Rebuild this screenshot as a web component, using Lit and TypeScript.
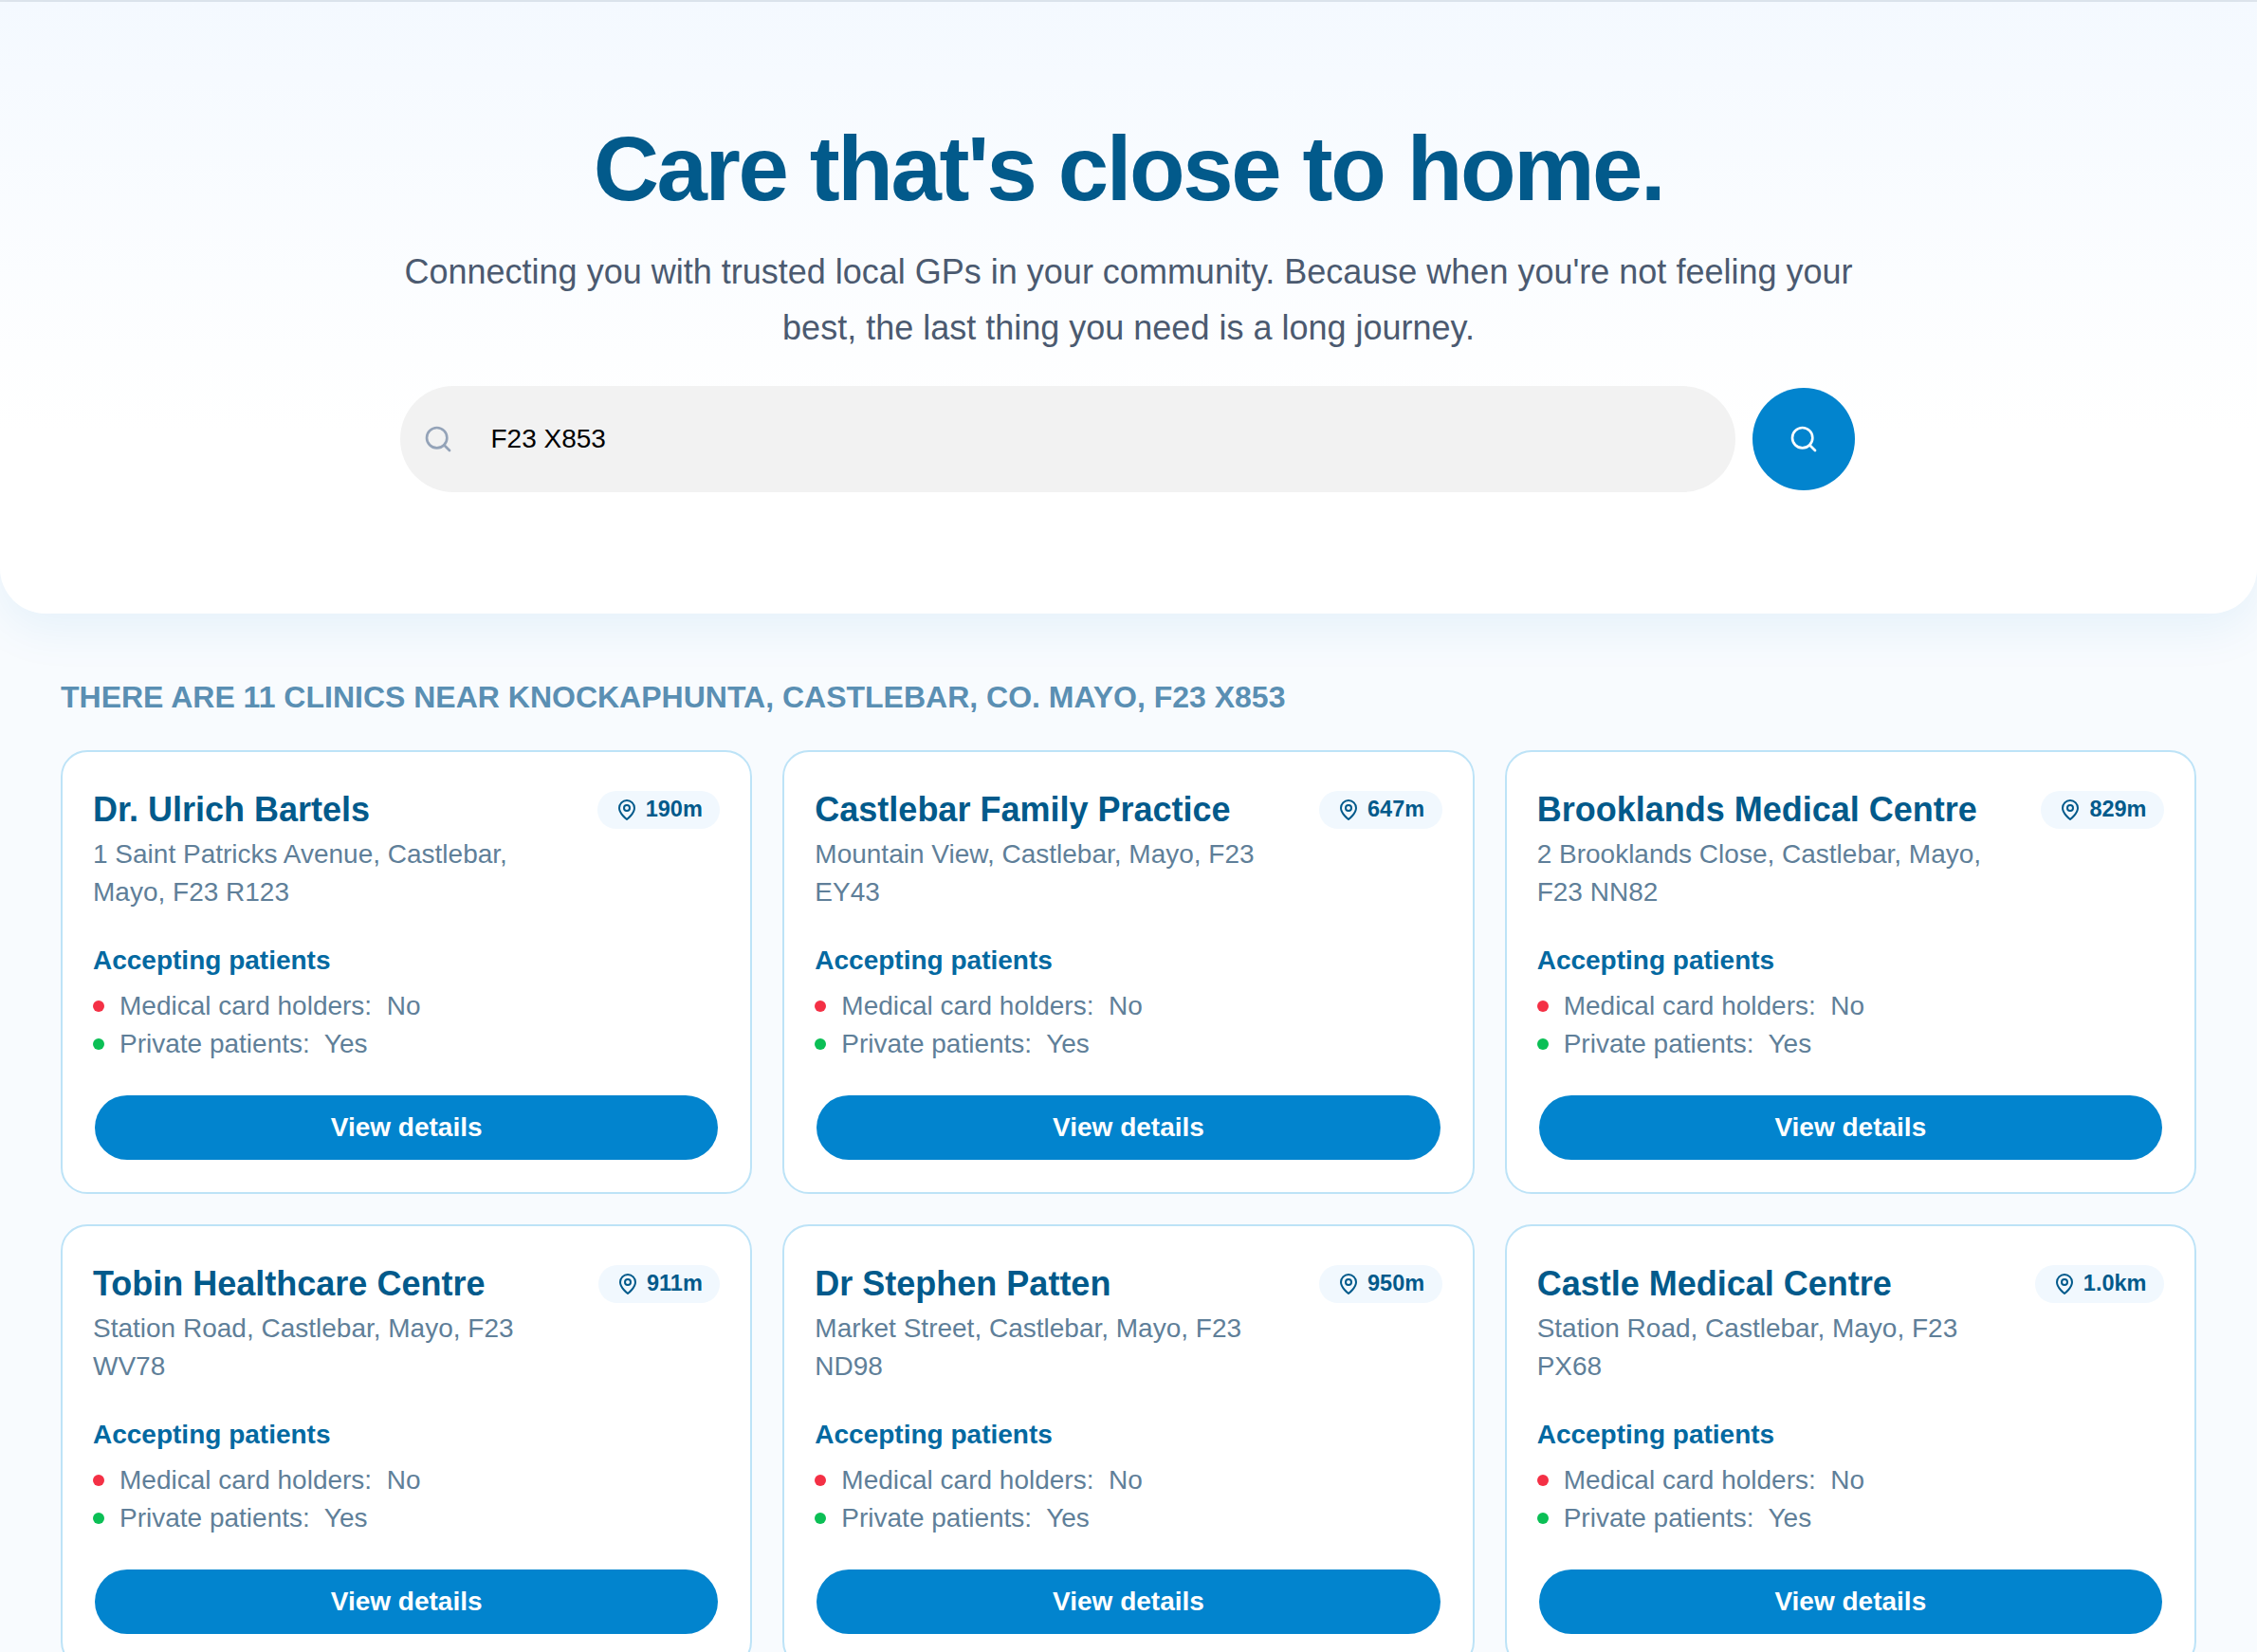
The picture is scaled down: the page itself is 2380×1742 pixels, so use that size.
import { LitElement, html, css, svg } from "lit";
import { customElement } from "lit/decorators.js";

const clinics = [
  { name: "Dr. Ulrich Bartels", dist: "190m", addr: "1 Saint Patricks Avenue, Castlebar, Mayo, F23 R123" },
  { name: "Castlebar Family Practice", dist: "647m", addr: "Mountain View, Castlebar, Mayo, F23 EY43" },
  { name: "Brooklands Medical Centre", dist: "829m", addr: "2 Brooklands Close, Castlebar, Mayo, F23 NN82" },
  { name: "Tobin Healthcare Centre", dist: "911m", addr: "Station Road, Castlebar, Mayo, F23 WV78" },
  { name: "Dr Stephen Patten", dist: "950m", addr: "Market Street, Castlebar, Mayo, F23 ND98" },
  { name: "Castle Medical Centre", dist: "1.0km", addr: "Station Road, Castlebar, Mayo, F23 PX68" },
];

const searchIcon = svg`<circle cx="11" cy="11" r="8"></circle><path d="m21 21-4.3-4.3"></path>`;
const pinIcon = svg`<path d="M20 10c0 6-8 12-8 12s-8-6-8-12a8 8 0 0 1 16 0Z"></path><circle cx="12" cy="10" r="3"></circle>`;

@customElement("app-root")
export class AppRoot extends LitElement {
  static styles = css`
    :host {
      display: block;
      height: 1742px;
      overflow: hidden;
      background: #f8fbfe;
      font-family: "Liberation Sans", Arial, sans-serif;
    }
    .topline { height: 2px; background: #dfe5ec; }
    .hero {
      position: relative;
      padding: 116px 0 128px;
      background: linear-gradient(180deg, #f4f9ff 0%, #ffffff 70%);
      border-radius: 0 0 48px 48px;
      box-shadow: 0 16px 50px rgba(2, 132, 206, 0.08);
      text-align: center;
    }
    h1 {
      margin: 0;
      font-size: 96px;
      line-height: 120px;
      font-weight: 700;
      letter-spacing: -2.4px;
      color: #025a8b;
    }
    .sub {
      margin: 19px auto 32px;
      width: 1600px;
      font-size: 36px;
      line-height: 59px;
      color: #4b5a70;
    }
    .search {
      display: flex;
      align-items: center;
      gap: 18px;
      width: 1537px;
      padding-right: 3px;
      box-sizing: border-box;
      margin: 0 auto;
    }
    .bar {
      flex: 1;
      height: 112px;
      display: flex;
      align-items: center;
      gap: 40px;
      padding-left: 24px;
      box-sizing: border-box;
      border-radius: 56px;
      background: #f2f2f2;
      font-size: 28px;
      color: #000;
    }
    .bar svg { color: #94a3b8; }
    .go {
      width: 108px;
      height: 108px;
      flex: none;
      border-radius: 50%;
      background: #0284ce;
      color: #fff;
      display: flex;
      align-items: center;
      justify-content: center;
    }
    svg.icon {
      fill: none;
      stroke: currentColor;
      stroke-width: 2;
      stroke-linecap: round;
      stroke-linejoin: round;
      flex: none;
    }
    main { padding: 0 64px; }
    h2 {
      margin: 67.5px 0 36.5px;
      font-size: 32px;
      line-height: 40px;
      font-weight: 700;
      color: #5a8fb3;
    }
    .grid {
      display: grid;
      grid-template-columns: repeat(3, 1fr);
      column-gap: 32px;
      row-gap: 32px;
    }
    .card {
      box-sizing: border-box;
      height: 468px;
      padding: 40.5px 32px 34px;
      border: 2.5px solid #bde3f7;
      border-radius: 28px;
      background: #fff;
      display: flex;
      flex-direction: column;
    }
    .head {
      display: flex;
      justify-content: space-between;
      align-items: center;
      height: 40px;
    }
    .name {
      font-size: 36px;
      line-height: 40px;
      font-weight: 700;
      color: #025a8b;
    }
    .badge {
      display: flex;
      align-items: center;
      gap: 8px;
      height: 40px;
      padding: 0 18.5px 0 19px;
      border-radius: 20px;
      background: #f1f8fe;
      font-size: 23.5px;
      font-weight: 700;
      color: #025a8b;
    }
    .addr {
      margin: 7px 0 0;
      max-width: 490px;
      font-size: 28px;
      line-height: 40px;
      color: #5f7f99;
    }
    .acc {
      margin-top: 32.5px;
      font-size: 28px;
      line-height: 40px;
      font-weight: 700;
      color: #0369a1;
    }
    .row {
      display: flex;
      align-items: center;
      gap: 16px;
      font-size: 28px;
      line-height: 40px;
      color: #5f7f99;
      white-space: pre;
    }
    .acc + .row { margin-top: 8px; }
    .dot { width: 12px; height: 12px; border-radius: 50%; }
    .no { background: #f43045; }
    .yes { background: #0bbf55; }
    .btn {
      margin: auto 2px 0;
      height: 68px;
      border-radius: 34px;
      background: #0284ce;
      color: #fff;
      font-size: 28px;
      font-weight: 700;
      display: flex;
      align-items: center;
      justify-content: center;
    }
  `;

  render() {
    return html`
      <div class="topline"></div>
      <section class="hero">
        <h1>Care that's close to home.</h1>
        <p class="sub">Connecting you with trusted local GPs in your community. Because when you're not feeling your best, the last thing you need is a long journey.</p>
        <div class="search">
          <div class="bar">
            <svg class="icon" width="32" height="32" viewBox="0 0 24 24">${searchIcon}</svg>
            <span>F23 X853</span>
          </div>
          <div class="go">
            <svg class="icon" width="32" height="32" viewBox="0 0 24 24">${searchIcon}</svg>
          </div>
        </div>
      </section>
      <main>
        <h2>THERE ARE 11 CLINICS NEAR KNOCKAPHUNTA, CASTLEBAR, CO. MAYO, F23 X853</h2>
        <div class="grid">
          ${clinics.map(
            (c) => html`
              <article class="card">
                <div class="head">
                  <span class="name">${c.name}</span>
                  <span class="badge">
                    <svg class="icon" width="24" height="24" viewBox="0 0 24 24">${pinIcon}</svg>
                    ${c.dist}
                  </span>
                </div>
                <p class="addr">${c.addr}</p>
                <div class="acc">Accepting patients</div>
                <div class="row"><span class="dot no"></span><span>Medical card holders:  No</span></div>
                <div class="row"><span class="dot yes"></span><span>Private patients:  Yes</span></div>
                <div class="btn">View details</div>
              </article>
            `
          )}
        </div>
      </main>
    `;
  }
}
